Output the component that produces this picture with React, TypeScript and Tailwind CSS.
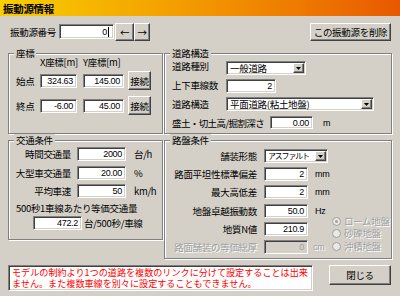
import type { ReactNode } from 'react'

const sunken =
    'border border-t-[#808080] border-l-[#808080] border-r-white border-b-white shadow-[inset_1px_1px_0_#404040,inset_-1px_-1px_0_#d4d0c8]'
const raised =
    'border border-t-white border-l-white border-r-[#404040] border-b-[#404040] shadow-[inset_-1px_-1px_0_#808080]'
const num = "[font-family:'Liberation_Sans',Arial,sans-serif] text-[9px] tracking-[-0.3px]"
const grayText = 'text-[#a0a0a0] [text-shadow:1px_1px_0_#ffffff]'

function NumBox({ value, className, disabled }: { value: string, className: string, disabled?: boolean }) {
    return (
        <div
            className={`${sunken} ${className} flex items-center justify-end pr-[3px] ${num} ${disabled ? 'bg-[#d4d0c8] text-[#a0a0a0]' : 'bg-white text-black'}`}
        >
            {value}
        </div>
    )
}

function Combo({ value, className, textClass }: { value: string, className: string, textClass?: string }) {
    return (
        <div className={`${sunken} ${className} bg-white flex items-stretch p-[1px]`}>
            <span className={`flex-1 pl-[2px] leading-[10px] whitespace-nowrap ${textClass ?? ''}`}>{value}</span>
            <span className={`${raised} w-[11px] bg-[#d4d0c8] flex items-center justify-center`}>
                <svg width="5" height="3" viewBox="0 0 5 3">
                    <path d="M0 0h5L2.5 3z" fill="#000" />
                </svg>
            </span>
        </div>
    )
}

function Btn({ children, className }: { children: ReactNode, className: string }) {
    return (
        <button className={`${raised} ${className} bg-[#d4d0c8] flex items-center justify-center leading-[10px] text-black`}>
            {children}
        </button>
    )
}

function Group({ title, className, children }: { title: string, className: string, children: ReactNode }) {
    return (
        <fieldset className={`border border-[#808080] shadow-[inset_1px_1px_0_#ffffff,1px_1px_0_#ffffff] min-w-0 ${className}`}>
            <legend className="ml-[5px] px-[2px] leading-[12px] bg-[#d4d0c8]">{title}</legend>
            {children}
        </fieldset>
    )
}

function CoordRow({ label, x, y, className }: { label: string, x: string, y: string, className: string }) {
    return (
        <div className={`flex items-center h-[19px] pl-[7px] ${className}`}>
            <span className="w-[24px]">{label}</span>
            <NumBox value={x} className="w-[37px] h-[14px]" />
            <NumBox value={y} className="w-[41px] h-[14px] ml-[6px]" />
            <Btn className="w-[23px] h-[19px] ml-[4px]">接続</Btn>
        </div>
    )
}

function TrafficRow({ label, value, unit, className }: { label: string, value: string, unit: string, className: string }) {
    return (
        <div className={`flex items-center h-[14px] ${className}`}>
            <span className="w-[62px] text-right whitespace-nowrap">{label}</span>
            <NumBox value={value} className="w-[49px] h-[14px] ml-[6px]" />
            <span className="ml-[8px]">{unit}</span>
        </div>
    )
}

function BaseRow({ label, children, className, disabled }: { label: string, children: ReactNode, className: string, disabled?: boolean }) {
    return (
        <div className={`flex items-center h-[14px] ${className}`}>
            <span className={`w-[92px] text-right whitespace-nowrap ${disabled ? grayText : ''}`}>{label}</span>
            <div className="ml-[7px] flex items-center">{children}</div>
        </div>
    )
}

function Radio({ label, checked, className }: { label: string, checked?: boolean, className?: string }) {
    return (
        <div className={`flex items-center h-[12.5px] gap-[3px] ${className ?? ''}`}>
            <span className="w-[9px] h-[9px] rounded-full border border-[#a0a0a0] bg-[#ebe9e5] flex items-center justify-center">
                {checked && <span className="w-[3px] h-[3px] rounded-full bg-[#a0a0a0]" />}
            </span>
            <span className={`whitespace-nowrap leading-[9px] ${grayText}`}>{label}</span>
        </div>
    )
}

export default function App() {
    return (
        <div className="w-[400px] h-[296px] bg-[#d4d0c8] overflow-hidden flex flex-col text-black [font-family:'Noto_Sans_CJK_JP',sans-serif] text-[9.5px] leading-[10px] tracking-[-0.3px]">
            <div className="h-[16px] bg-linear-to-r from-[#f7cf00] to-[#e85800] pl-[3px] pt-[3px] font-bold text-[10.5px] leading-[12px]">
                振動源情報
            </div>

            <div className="mt-[6px] h-[19px] flex items-center pl-[10px] pr-[9px]">
                <span className="w-[49px] whitespace-nowrap">振動源番号</span>
                <div className={`${sunken} w-[55px] h-[15px] bg-white flex items-center justify-end pr-[4px] ${num}`}>
                    0<span className="w-[1px] h-[10px] bg-black ml-[1px]" />
                </div>
                <Btn className="w-[19px] h-[18px] ml-[1px]">←</Btn>
                <Btn className="w-[16px] h-[18px]">→</Btn>
                <Btn className="ml-auto w-[81px] h-[18px]">この振動源を削除</Btn>
            </div>

            <div className="mt-[6px] flex gap-[1px] pl-[8px]">
                {/* left column */}
                <div className="w-[155px] flex flex-col">
                    <Group title="座標" className="h-[87px]">
                        <div className="-mt-[2px] h-[10px] flex pl-[31px]">
                            <span className="w-[43px]">X座標[m]</span>
                            <span>Y座標[m]</span>
                        </div>
                        <CoordRow label="始点" x="324.63" y="145.00" className="mt-[4px]" />
                        <CoordRow label="終点" x="-6.00" y="45.00" className="mt-[6px]" />
                    </Group>
                    <Group title="交通条件" className="h-[106px]">
                        <TrafficRow label="時間交通量" value="2000" unit="台/h" className="mt-[1px]" />
                        <TrafficRow label="大型車交通量" value="20.00" unit="%" className="mt-[5px]" />
                        <TrafficRow label="平均車速" value="50" unit="km/h" className="mt-[4px]" />
                        <div className="mt-[5px] h-[10px] pl-[7px] whitespace-nowrap">500秒1車線あたり等価交通量</div>
                        <div className="mt-[3px] flex items-center pl-[24px]">
                            <NumBox value="472.2" className="w-[49px] h-[14px]" />
                            <span className="ml-[2px] whitespace-nowrap">台/500秒/車線</span>
                        </div>
                    </Group>
                </div>

                {/* right column */}
                <div className="w-[228px] flex flex-col">
                    <Group title="道路構造" className="h-[87px]">
                        <div className="mt-[2px] flex items-start pl-[7px]">
                            <span className="w-[54px]">道路種別</span>
                            <Combo value="一般道路" className="w-[80px] h-[14px]" />
                        </div>
                        <div className="mt-[4px] flex items-start pl-[7px]">
                            <span className="w-[54px] mt-[1px]">上下車線数</span>
                            <NumBox value="2" className="w-[50px] h-[14px]" />
                        </div>
                        <div className="mt-[4px] flex items-start pl-[7px]">
                            <span className="w-[54px] mt-[2px]">道路構造</span>
                            <Combo value="平面道路(粘土地盤)" className="w-[148px] h-[14px]" />
                        </div>
                        <div className="mt-[4px] h-[15px] flex items-center pl-[7px]">
                            <span className="w-[98px] whitespace-nowrap tracking-[-0.6px]">盛土・切土高/掘割深さ</span>
                            <NumBox value="0.00" className="w-[43px] h-[13px]" />
                            <span className={`ml-[10px] ${num}`}>m</span>
                        </div>
                    </Group>
                    <Group title="路盤条件" className="h-[125px]">
                        <div className="flex">
                            <div className="w-[167px] flex flex-col">
                                <BaseRow label="舗装形態" className="mt-[3px]">
                                    <Combo value="アスファルト" className="w-[64px] h-[14px]" textClass="text-[8px] tracking-[-1.2px]" />
                                </BaseRow>
                                <BaseRow label="路面平坦性標準偏差" className="mt-[4px]">
                                    <NumBox value="2" className="w-[44px] h-[14px]" />
                                    <span className={`ml-[7px] ${num}`}>mm</span>
                                </BaseRow>
                                <BaseRow label="最大高低差" className="mt-[4px]">
                                    <NumBox value="2" className="w-[44px] h-[14px]" />
                                    <span className={`ml-[7px] ${num}`}>mm</span>
                                </BaseRow>
                                <BaseRow label="地盤卓越振動数" className="mt-[5px]">
                                    <NumBox value="50.0" className="w-[44px] h-[14px]" />
                                    <span className={`ml-[7px] ${num}`}>Hz</span>
                                </BaseRow>
                                <BaseRow label="地質N値" className="mt-[4px]">
                                    <NumBox value="210.9" className="w-[44px] h-[14px]" />
                                </BaseRow>
                                <BaseRow label="路面舗装の等価総厚" className="mt-[4px]" disabled>
                                    <NumBox value="0" className="w-[44px] h-[14px]" disabled />
                                    <span className={`ml-[5px] ${num} ${grayText}`}>cm</span>
                                </BaseRow>
                            </div>
                            <div className="flex flex-col mt-[69px]">
                                <Radio label="ローム地盤" checked />
                                <Radio label="砂礫地盤" />
                                <Radio label="沖積地盤" />
                            </div>
                        </div>
                    </Group>
                </div>
            </div>

            <div className="mt-[6px] flex items-start pl-[8px] pr-[9px]">
                <div className={`${sunken} w-[305px] h-[26px] bg-white pl-[3px] pt-[1px] text-[#ff0000] text-[9.1px] leading-[11px] tracking-normal whitespace-nowrap`}>
                    モデルの制約より1つの道路を複数のリンクに分けて設定することは出来
                    <br />
                    ません。また複数車線を別々に設定することもできません。
                </div>
                <Btn className="ml-auto w-[62px] h-[20px]">閉じる</Btn>
            </div>
        </div>
    )
}
